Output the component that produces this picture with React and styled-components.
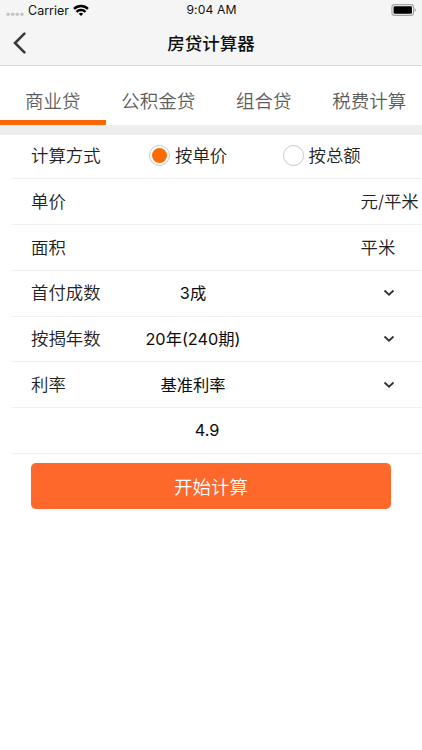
import React, { useState } from "react";
import styled, { createGlobalStyle } from "styled-components";

const GlobalStyle = createGlobalStyle`
  * { box-sizing: border-box; }
  body { margin: 0; background: #fff; }
  button { font: inherit; border: 0; padding: 0; background: none; color: inherit; }
`;

const Screen = styled.div`
  width: 100%;
  height: 750px;
  overflow: hidden;
  background: #fff;
  color: #222;
  font-family: Inter, "Noto Sans CJK SC", sans-serif;
  font-size: 17.4px;
  line-height: 1;
  white-space: nowrap;
`;

const TopArea = styled.header`
  height: 66px;
  background: #f5f5f5;
  border-bottom: 1px solid #dadada;
`;

const StatusBar = styled.div`
  display: grid;
  grid-template-columns: 1fr auto 1fr;
  align-items: center;
  height: 20px;
  padding: 0 5px 0 6px;
  color: #111;
  font-size: 12.5px;
`;

const Carrier = styled.div`
  display: flex;
  align-items: center;
  gap: 4px;
`;

const CarrierName = styled.span`
  padding-top: 2px;
`;

const Time = styled.span`
  padding-top: 1px;
  font-size: 12.2px;
  letter-spacing: 0.1px;
`;

const BatteryIcon = styled.svg`
  justify-self: end;
  display: block;
`;

const NavBar = styled.div`
  display: grid;
  grid-template-columns: 40px 1fr 40px;
  align-items: center;
  height: 46px;
`;

const BackButton = styled.button`
  display: flex;
  padding-left: 12px;
`;

const Title = styled.h1`
  margin: 0;
  padding-top: 1px;
  text-align: center;
  font-size: 17.5px;
  font-weight: 500;
  color: #111;
`;

const Tabs = styled.nav`
  display: grid;
  grid-template-columns: repeat(4, 1fr);
  height: 68.5px;
  border-bottom: 10px solid #eee;
`;

const Tab = styled.button`
  height: 58.5px;
  padding-top: 17px;
  font-size: 18.5px;
  font-weight: 350;
  color: #5c5c5c;
  border-bottom: 5px solid ${(p) => (p.$active ? "#fb6502" : "transparent")};
`;

const Form = styled.form`
  display: flex;
  flex-direction: column;
  margin-top: -1.3px;
`;

const Row = styled.div`
  display: grid;
  grid-template-columns: 135px 1fr 61.5px;
  align-items: center;
  height: 45.83px;
  margin-left: 10.5px;
  padding-left: 20.5px;
  border-bottom: 1px solid #f1f1f3;
`;

const ChoiceRow = styled(Row)`
  grid-template-columns: 118px 133.5px 1fr;
`;

const Label = styled.span`
  font-weight: 350;
`;

const Value = styled.span`
  justify-self: center;
  transform: translateX(${(p) => p.$shift}px);
  color: #0c0c0c;
  font-size: 16.3px;
`;

const SelectRow = styled(Row)`
  grid-template-columns: 87px 150px 1fr;
`;

const Arrow = styled.svg`
  justify-self: end;
  margin-right: 27px;
`;

const Choice = styled.button`
  display: flex;
  align-items: center;
  gap: 5px;
`;

const Radio = styled.span`
  display: flex;
  align-items: center;
  justify-content: center;
  width: 21px;
  height: 21px;
  border: 1px solid #c9c9c9;
  border-radius: 50%;

  &::after {
    content: "";
    width: 15px;
    height: 15px;
    border-radius: 50%;
    background: ${(p) => (p.$checked ? "#fb6b05" : "transparent")};
  }
`;

const Submit = styled.button`
  height: 46px;
  margin: 9.2px 31px 0;
  padding-top: 2px;
  border-radius: 5px;
  background: #fe682b;
  color: #fff;
  font-size: 18.5px;
  font-weight: 350;
`;

const tabNames = ["商业贷", "公积金贷", "组合贷", "税费计算"];
const modes = ["按单价", "按总额"];
const inputs = [
  { label: "单价", unit: "元/平米" },
  { label: "面积", unit: "平米" },
];
const selects = [
  { label: "首付成数", value: "3成" },
  { label: "按揭年数", value: "20年(240期)" },
  { label: "利率", value: "基准利率" },
];

function Signal() {
  return (
    <svg width="18" height="13" viewBox="0 0 18 13" fill="#c4c4c4">
      {[2.1, 6.7, 11.3, 15.9].map((x) => (
        <circle key={x} cx={x} cy="10.3" r="1.8" />
      ))}
    </svg>
  );
}

function Wifi() {
  return (
    <svg width="16" height="12" viewBox="0 0 16 12" fill="none" stroke="#000" strokeWidth="2.4">
      <path d="M1 4.9a10 10 0 0 1 14 0" />
      <path d="M3.5 7.8a6.5 6.5 0 0 1 9 0" />
      <path d="M8 12 5.7 9.7a3.5 3.5 0 0 1 4.6 0z" fill="#000" stroke="none" />
    </svg>
  );
}

function Battery() {
  return (
    <BatteryIcon width="26" height="12" viewBox="0 0 26 12">
      <rect x="0.9" y="0.6" width="21.6" height="10.8" rx="2.7" fill="none" stroke="#a4a4a4" strokeWidth="1.1" />
      <rect x="2.6" y="2.2" width="18.3" height="7.6" rx="1.2" fill="#000" />
      <path d="M23.6 4a2.2 2.2 0 0 1 0 4z" fill="#a4a4a4" />
    </BatteryIcon>
  );
}

export default function App() {
  const [tab, setTab] = useState(0);
  const [mode, setMode] = useState(0);

  return (
    <Screen>
      <GlobalStyle />
      <TopArea>
        <StatusBar>
          <Carrier>
            <Signal />
            <CarrierName>Carrier</CarrierName>
            <Wifi />
          </Carrier>
          <Time>9:04 AM</Time>
          <Battery />
        </StatusBar>
        <NavBar>
          <BackButton type="button" aria-label="返回">
            <svg width="15" height="22" viewBox="0 0 15 22" fill="none" stroke="#3a3a3a" strokeWidth="2.6" strokeLinecap="round">
              <path d="M12.4 1.6 3 11l9.4 9.4" />
            </svg>
          </BackButton>
          <Title>房贷计算器</Title>
        </NavBar>
      </TopArea>
      <Tabs>
        {tabNames.map((name, i) => (
          <Tab key={name} type="button" $active={tab === i} onClick={() => setTab(i)}>
            {name}
          </Tab>
        ))}
      </Tabs>
      <Form>
        <ChoiceRow>
          <Label>计算方式</Label>
          {modes.map((name, i) => (
            <Choice key={name} type="button" onClick={() => setMode(i)}>
              <Radio $checked={mode === i} />
              <Label>{name}</Label>
            </Choice>
          ))}
        </ChoiceRow>
        {inputs.map(({ label, unit }) => (
          <Row key={label}>
            <Label>{label}</Label>
            <span />
            <Label>{unit}</Label>
          </Row>
        ))}
        {selects.map(({ label, value }) => (
          <SelectRow key={label}>
            <Label>{label}</Label>
            <Value $shift={0}>{value}</Value>
            <Arrow width="12" height="8" viewBox="0 0 12 8" fill="none" stroke="#333" strokeWidth="1.8">
              <path d="M1.5 1.5 6 5.7l4.5-4.2" />
            </Arrow>
          </SelectRow>
        ))}
        <SelectRow>
          <span />
          <Value $shift={14}>4.9</Value>
        </SelectRow>
        <Submit type="button">开始计算</Submit>
      </Form>
    </Screen>
  );
}
